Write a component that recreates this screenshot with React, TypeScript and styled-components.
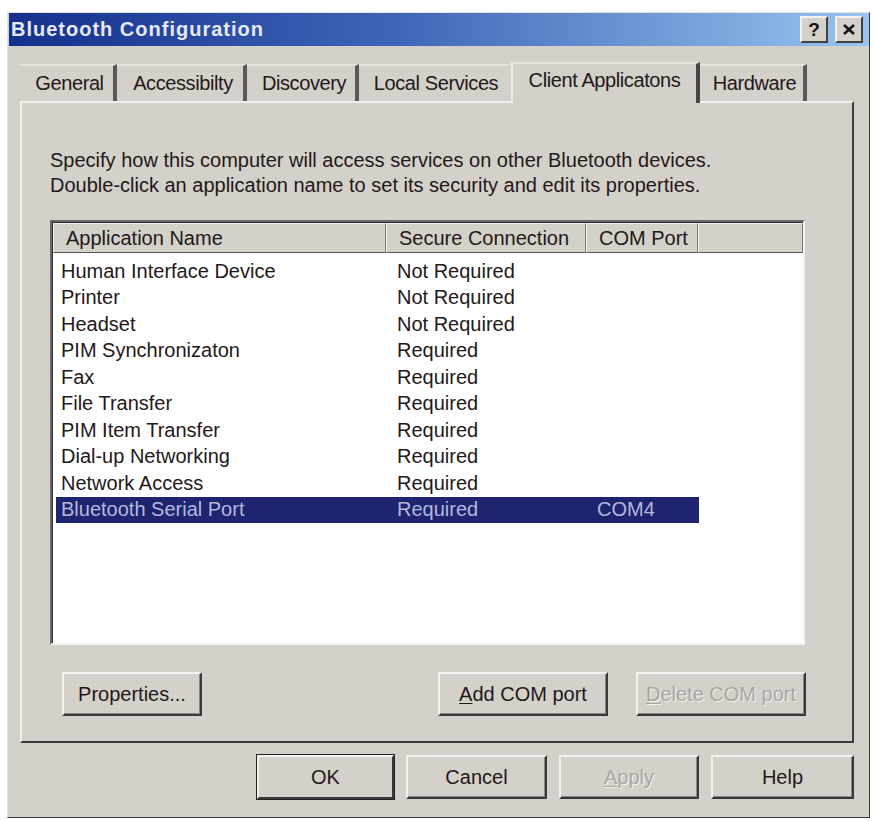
import styled, { createGlobalStyle } from "styled-components";

const GlobalStyle = createGlobalStyle`
  body {
    margin: 0;
    background: #ffffff;
    font-family: "Liberation Sans", Arial, sans-serif;
    color: #241818;
  }
`;

const Window = styled.div`
  margin: 12px 0 0 7px;
  width: 863px;
  height: 806px;
  box-sizing: border-box;
  background: #d4d1ca;
  border: 1px solid;
  border-color: #e4e2dc #3a3a3a #3a3a3a #e4e2dc;
  display: flex;
  flex-direction: column;
`;

const TitleBar = styled.div`
  height: 33px;
  margin: 0 0 0 1px;
  display: flex;
  align-items: center;
  justify-content: space-between;
  padding: 0 6px 0 2px;
  background: linear-gradient(90deg, #14308c 0%, #3e66b8 45%, #98c4ee 100%);
`;

const Title = styled.span`
  font-weight: bold;
  font-size: 20px;
  letter-spacing: 1px;
  color: #e6e8f4;
`;

const TitleButtons = styled.div`
  display: flex;
  gap: 7px;
`;

const TitleButton = styled.div`
  width: 28px;
  height: 27px;
  box-sizing: border-box;
  background: #d4d1ca;
  border: 2px solid;
  border-color: #f4f2ee #404040 #404040 #f4f2ee;
  display: flex;
  align-items: center;
  justify-content: center;
  font-weight: bold;
  font-size: 19px;
  color: #1a1212;
`;

const Body = styled.div`
  display: flex;
  flex-direction: column;
  padding: 0 15px 0 12px;
`;

const TabStrip = styled.div`
  height: 55px;
  display: flex;
  align-items: flex-end;
  position: relative;
  z-index: 1;
`;

const Tab = styled.div<{ $w: number; $active?: boolean }>`
  width: ${(p) => p.$w}px;
  height: ${(p) => (p.$active ? 41 : 37)}px;
  margin-bottom: ${(p) => (p.$active ? -2 : 0)}px;
  box-sizing: border-box;
  display: flex;
  align-items: center;
  justify-content: center;
  padding-bottom: ${(p) => (p.$active ? 6 : 0)}px;
  padding-left: ${(p) => (p.$active ? 0 : 6)}px;
  font-size: 20px;
  letter-spacing: -0.4px;
  background: #d4d1ca;
  border-top: 2px solid #e6e4de;
  border-left: ${(p) => (p.$active ? "2px solid #ecebe6" : "none")};
  border-right: 4px solid ${(p) => (p.$active ? "#4a4646" : "#5c5858")};
  &.noedge {
    border-right-color: transparent;
  }
`;

const Panel = styled.div`
  height: 642px;
  box-sizing: border-box;
  border: 2px solid;
  border-color: #f2f0ec #3c3a3a #3c3a3a #f2f0ec;
  padding: 45px 46px 0 28px;
  display: flex;
  flex-direction: column;
`;

const Description = styled.p`
  margin: 0;
  font-size: 20px;
  line-height: 25px;
  letter-spacing: 0;
`;

const ListBox = styled.div`
  margin-top: 22px;
  width: 755px;
  height: 425px;
  box-sizing: border-box;
  background: #ffffff;
  border: 2px solid;
  border-color: #6a6868 #f4f2ee #f4f2ee #6a6868;
  box-shadow: inset 1px 1px 0 #2e2c2c;
  display: flex;
  flex-direction: column;
`;

const Header = styled.div`
  height: 30px;
  display: flex;
  background: #d4d1ca;
  margin-left: 1px;
  margin-top: 1px;
`;

const HeaderCell = styled.div<{ $w?: number }>`
  ${(p) => (p.$w ? `width: ${p.$w}px;` : "flex: 1;")}
  box-sizing: border-box;
  padding-left: 12px;
  display: flex;
  align-items: center;
  font-size: 20px;
  letter-spacing: 0;
  border: 1px solid;
  border-color: #f4f2ee #7c7878 #5a5656 #f4f2ee;
`;

const Rows = styled.div`
  padding: 5px 0 0 4px;
  display: flex;
  flex-direction: column;
`;

const Row = styled.div<{ $selected?: boolean }>`
  width: 643px;
  height: 26.5px;
  display: grid;
  grid-template-columns: 336px 200px 107px;
  align-items: center;
  font-size: 20px;
  letter-spacing: 0;
  background: ${(p) => (p.$selected ? "#1e2470" : "transparent")};
  color: ${(p) => (p.$selected ? "#b4b8dc" : "inherit")};
  span {
    padding-left: 5px;
    white-space: nowrap;
  }
`;

const ButtonRow = styled.div`
  margin-top: 27px;
  display: flex;
  padding-left: 12px;
`;

const Button = styled.div<{ $w: number; $disabled?: boolean; $default?: boolean }>`
  width: ${(p) => p.$w}px;
  height: 44px;
  box-sizing: border-box;
  display: flex;
  align-items: center;
  justify-content: center;
  font-size: 20px;
  letter-spacing: 0;
  background: #d4d1ca;
  border: 2px solid;
  border-color: #f4f2ee #3a3838 #3a3838 #f4f2ee;
  box-shadow: ${(p) => (p.$default ? "0 0 0 1px #2a2020" : "inset -1px -1px 0 #8a8686")};
  color: ${(p) => (p.$disabled ? "#a9a6a2" : "inherit")};
  text-shadow: ${(p) => (p.$disabled ? "1px 1px 0 #f4f2ee" : "none")};
  u {
    text-decoration-thickness: 1px;
    text-underline-offset: 2px;
  }
`;

const Spacer = styled.div`
  flex: 1;
`;

const Footer = styled.div`
  margin-top: 12px;
  display: flex;
  justify-content: flex-end;
  gap: 12px;
`;

const rows: [string, string, string][] = [
  ["Human Interface Device", "Not Required", ""],
  ["Printer", "Not Required", ""],
  ["Headset", "Not Required", ""],
  ["PIM Synchronizaton", "Required", ""],
  ["Fax", "Required", ""],
  ["File Transfer", "Required", ""],
  ["PIM Item Transfer", "Required", ""],
  ["Dial-up Networking", "Required", ""],
  ["Network Access", "Required", ""],
  ["Bluetooth Serial Port", "Required", "COM4"],
];

const tabs: [string, number][] = [
  ["General", 97],
  ["Accessibilty", 130],
  ["Discovery", 112],
  ["Local Services", 152],
  ["Client Applicatons", 189],
  ["Hardware", 107],
];

export default function App() {
  return (
    <>
      <GlobalStyle />
      <Window>
        <TitleBar>
          <Title>Bluetooth Configuration</Title>
          <TitleButtons>
            <TitleButton>?</TitleButton>
            <TitleButton>
              <svg width="12" height="11" viewBox="0 0 12 11">
                <path d="M1 1 L11 10 M11 1 L1 10" stroke="#1a1212" strokeWidth="2.6" />
              </svg>
            </TitleButton>
          </TitleButtons>
        </TitleBar>
        <Body>
          <TabStrip>
            {tabs.map(([label, w], i) => (
              <Tab
                key={label}
                $w={w}
                $active={i === 4}
                className={i === 3 ? "noedge" : undefined}
              >
                {label}
              </Tab>
            ))}
          </TabStrip>
          <Panel>
            <Description>
              Specify how this computer will access services on other Bluetooth devices.
              <br />
              Double-click an application name to set its security and edit its properties.
            </Description>
            <ListBox>
              <Header>
                <HeaderCell $w={333}>Application Name</HeaderCell>
                <HeaderCell $w={200}>Secure Connection</HeaderCell>
                <HeaderCell $w={112}>COM Port</HeaderCell>
                <HeaderCell />
              </Header>
              <Rows>
                {rows.map(([name, secure, port]) => (
                  <Row key={name} $selected={port !== ""}>
                    <span>{name}</span>
                    <span>{secure}</span>
                    <span>{port}</span>
                  </Row>
                ))}
              </Rows>
            </ListBox>
            <ButtonRow>
              <Button $w={140}>Properties...</Button>
              <Spacer />
              <Button $w={170}>
                <span>
                  <u>A</u>dd COM port
                </span>
              </Button>
              <Button $w={170} $disabled style={{ marginLeft: 28 }}>
                <span>
                  <u>D</u>elete COM port
                </span>
              </Button>
            </ButtonRow>
          </Panel>
          <Footer>
            <Button $w={137} $default>
              OK
            </Button>
            <Button $w={141}>Cancel</Button>
            <Button $w={140} $disabled>
              <span>
                <u>A</u>pply
              </span>
            </Button>
            <Button $w={143}>Help</Button>
          </Footer>
        </Body>
      </Window>
    </>
  );
}
